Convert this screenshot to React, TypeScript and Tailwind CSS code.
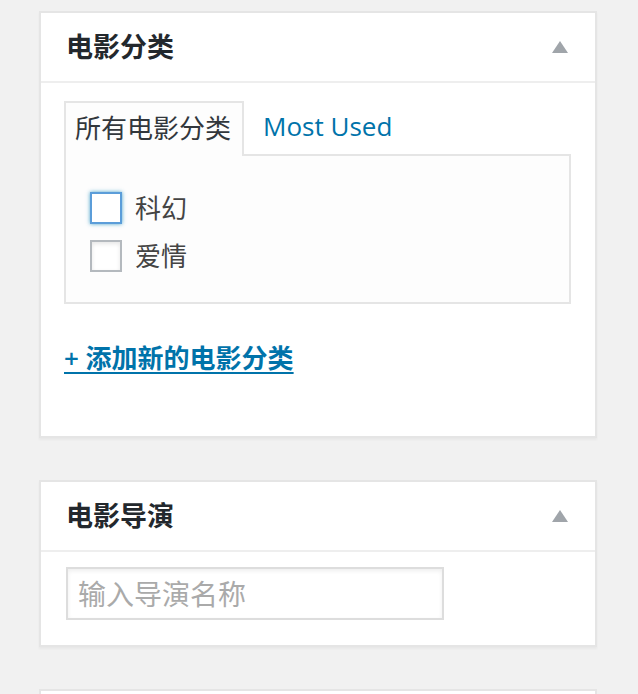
import { useState } from 'react';

const font = { fontFamily: '"Open Sans", "Noto Sans CJK SC", sans-serif' };

function Toggle() {
  return (
    <svg width="16" height="12" viewBox="0 0 16 12" className="shrink-0">
      <polygon points="8,0 16,12 0,12" fill="#a0a5aa" />
    </svg>
  );
}

function PanelHeader({ title }: { title: string }) {
  return (
    <div className="h-[70px] flex items-center justify-between pl-[25px] pr-[27px] border-b-2 border-[#eeeeee]">
      <h2 className="text-[27px] leading-[36px] font-semibold text-[#23282d]">{title}</h2>
      <Toggle />
    </div>
  );
}

export default function App() {
  const [checked, setChecked] = useState<Record<string, boolean>>({});
  const cats = ['科幻', '爱情'];

  return (
    <div className="min-h-screen bg-[#f1f1f1] pt-[11px] pl-[39px]" style={font}>
      <div className="w-[558px] flex flex-col gap-[42px]">
        {/* 电影分类 */}
        <div className="bg-white border-2 border-[#e5e5e5] shadow-[0_2px_2px_rgba(0,0,0,0.04)]">
          <PanelHeader title="电影分类" />
          <div className="pt-[18px] pl-[23px] pr-[24px] pb-[60px]">
            <div className="flex items-start">
              <div className="relative z-10 -mb-[2px] h-[55px] w-[180px] flex items-center pl-[9px] pb-[3px] border-2 border-b-0 border-[#e5e5e5] bg-[#fdfdfd] text-[26px] text-[#32373c] leading-[36px]">
                所有电影分类
              </div>
              <div className="ml-[19px] h-[53px] flex items-center pb-[3px] text-[26px] leading-[36px] text-[#0073aa]">
                Most Used
              </div>
            </div>
            <div className="h-[150px] border-2 border-[#e5e5e5] bg-[#fdfdfd] pt-[36px] pl-[24px] flex flex-col gap-[16px]">
              {cats.map((c, i) => (
                <label key={c} className="flex items-center gap-[13px] h-[32px] text-[26px] leading-[32px] text-[#444444] cursor-pointer">
                  <span
                    onClick={() => setChecked({ ...checked, [c]: !checked[c] })}
                    className={
                      i === 0
                        ? 'w-[32px] h-[32px] bg-white border-2 border-[#5b9dd9] shadow-[0_0_4px_rgba(30,140,190,0.8)]'
                        : 'w-[32px] h-[32px] bg-white border-2 border-[#b4b9be] shadow-[inset_0_2px_4px_rgba(0,0,0,0.1)]'
                    }
                  />
                  {c}
                </label>
              ))}
            </div>
            <h4 className="mt-[36px] text-[26px] leading-[36px] font-semibold">
              <a href="#" className="text-[#0073aa] underline underline-offset-[4px] decoration-2">
                + 添加新的电影分类
              </a>
            </h4>
          </div>
        </div>

        {/* 电影导演 */}
        <div className="bg-white border-2 border-[#e5e5e5] shadow-[0_2px_2px_rgba(0,0,0,0.04)]">
          <PanelHeader title="电影导演" />
          <div className="pt-[15px] pl-[25px] pb-[25px]">
            <input
              type="text"
              placeholder="输入导演名称"
              className="w-[378px] h-[53px] px-[10px] border-2 border-[#dddddd] bg-white text-[28px] text-[#32373c] placeholder:text-[#aaaaaa] shadow-[inset_0_2px_4px_rgba(0,0,0,0.07)] outline-none"
            />
          </div>
        </div>

        {/* next box */}
        <div className="h-[80px] bg-white border-2 border-[#e5e5e5]" />
      </div>
    </div>
  );
}
